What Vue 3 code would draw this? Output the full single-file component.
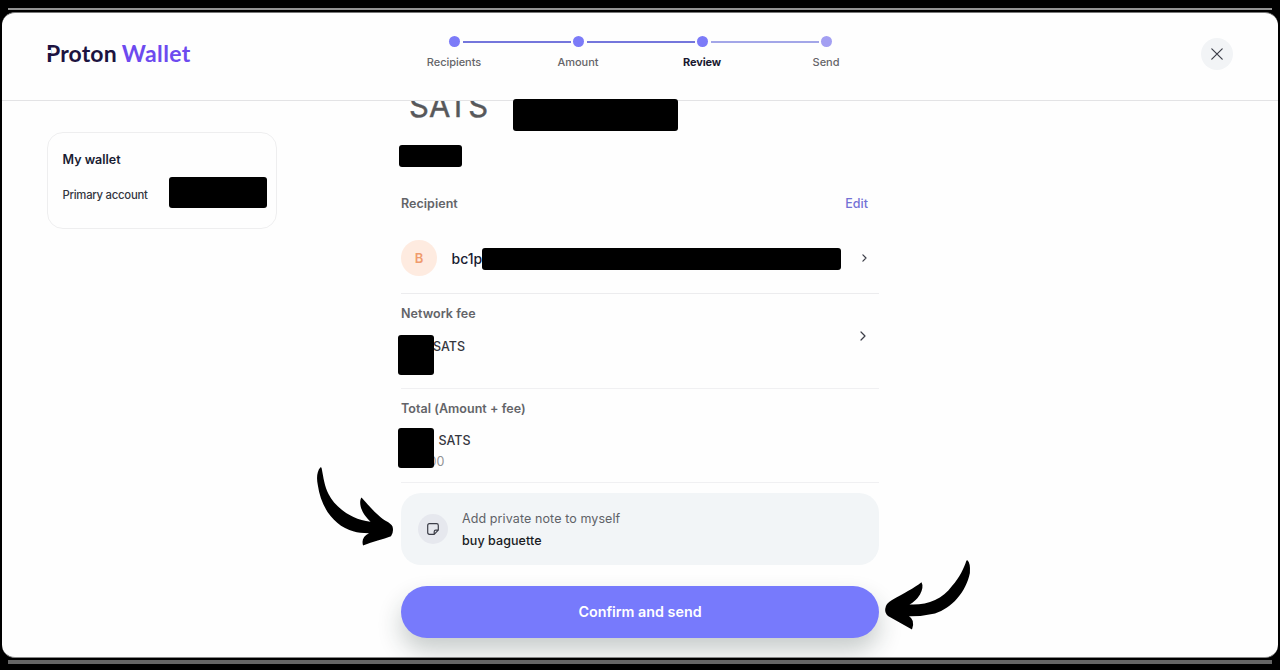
<script setup>
const steps = [
  { label: 'Recipients', state: 'done' },
  { label: 'Amount', state: 'done' },
  { label: 'Review', state: 'current' },
  { label: 'Send', state: 'next' },
]
</script>

<template>
  <div class="screen">
    <div class="stripe top"></div>
    <div class="stripe bottom"></div>
    <div class="window">
      <header class="header">
        <div class="logo"><span class="brand">Proton</span><span class="product">Wallet</span></div>
        <ol class="steps">
          <li v-for="step in steps" :key="step.label" :class="['step', step.state]">
            <i class="dot"></i>
            <span class="step-label">{{ step.label }}</span>
          </li>
        </ol>
        <button class="close" aria-label="Close">
          <svg width="12" height="12" viewBox="0 0 12 12"><path d="M.8.8 11.2 11.2M11.2.8.8 11.2" /></svg>
        </button>
      </header>

      <main class="main">
        <aside class="wallet">
          <strong class="wallet-name">My wallet</strong>
          <span class="wallet-account">Primary account</span>
          <i class="mask mask-balance"></i>
        </aside>

        <section class="review">
          <div class="amount">
            <div class="amount-clip"><span class="amount-unit">SATS</span></div>
            <i class="mask mask-amount"></i>
            <i class="mask mask-fiat"></i>
          </div>

          <div class="section-head">
            <span class="label recipient-label">Recipient</span>
            <a class="edit">Edit</a>
          </div>
          <div class="recipient">
            <span class="avatar">B</span>
            <span class="address">bc1p</span>
            <i class="mask mask-address"></i>
            <svg class="chevron small" width="5" height="8" viewBox="0 0 5 8"><path d="M.9.9 4 4 .9 7.1" /></svg>
          </div>

          <div class="row">
            <span class="label fee-label">Network fee</span>
            <span class="value fee-value">SATS</span>
            <i class="mask mask-row"></i>
            <svg class="chevron large" width="6" height="10" viewBox="0 0 6 10"><path d="M1 1 5 5 1 9" /></svg>
          </div>

          <div class="row">
            <span class="label total-label">Total (Amount + fee)</span>
            <span class="value total-value">SATS</span>
            <span class="fiat">00</span>
            <i class="mask mask-row mask-total"></i>
          </div>

          <div class="note">
            <span class="note-icon">
              <svg width="12" height="12" viewBox="0 0 12 12"><path d="M2.4.7h7.2q1.7 0 1.7 1.7v4.8L7.2 11.3H2.4Q.7 11.3.7 9.6V2.4Q.7.7 2.4.7Z M11.2 7.2H8.7Q7.2 7.2 7.2 8.7v2.5" /></svg>
            </span>
            <div class="note-text">
              <span class="note-title">Add private note to myself</span>
              <span class="note-value">buy baguette</span>
            </div>
          </div>

          <button class="confirm"><span>Confirm and send</span></button>
        </section>
      </main>
    </div>

    <svg class="arrow arrow-note" width="80" height="82" viewBox="315 465 80 82">
      <path d="M320.3 467.4C317 471 316.3 478 317.8 485C321 508 334 526 354 531.6Q359 533 369 533.3C363.500 536 361.500 540 363 545.4C373 541.500 383 539.500 391 536.3Q394 532 392.500 526.500Q391 523.500 386 521C380 518 371 508 366 502.500L361.500 497.4C358.500 502 361 510 365 515.5Q368 519.500 370.500 521.8C351 519.500 335 507 328.500 494C324.500 486 323.500 478 321.700 468.500Q321.300 466.800 320.300 467.400Z" />
    </svg>
    <svg class="arrow arrow-confirm" width="90" height="74" viewBox="883 558 90 74">
      <path d="M967.400 560.300Q970.600 563 969.900 573C966 592 952 608 935 613.500Q922 616.500 909 616.300Q915.500 620 912 629.600C904 625 896 620.500 888 616Q884.800 613 885.200 609Q885.500 603.500 892 600C904 593.500 914 588 921.500 582.300Q924 587 920 594.500Q916 601 909.500 604.500C927 605.500 942 599.500 952 586C960 577 964 568 966.300 561Q966.700 559.800 967.400 560.300Z" />
    </svg>
  </div>
</template>

<style>
body { margin: 0; background: #000; }
</style>

<style scoped>
* { box-sizing: border-box; }
.screen { position: relative; height: 670px; padding: 12px 2px; overflow: hidden; background: #000; font-family: Inter, "Liberation Sans", sans-serif; color: #191c32; }
.screen span, .screen strong, .screen a { white-space: nowrap; }
.stripe { position: absolute; left: 8px; right: 8px; }
.top { top: 8px; height: 2px; background: #929292; }
.bottom { top: 660px; height: 4px; background: #656565; }
.window { position: relative; height: 646px; background: #fefefe; border-top: 1px solid #777; border-bottom: 1px solid #888; border-radius: 13px; overflow: hidden; }
.header { display: flex; align-items: flex-start; height: 88px; border-bottom: 1px solid #e3e3e5; }
.logo { display: flex; gap: 5px; width: 390px; padding: 26px 0 0 44px; font-family: Lato, "Open Sans", sans-serif; font-weight: 700; font-size: 23px; line-height: 28px; }
.brand { position: relative; color: #1c1340; letter-spacing: .15px; }
.brand::after { content: ""; position: absolute; left: 0; top: 11px; width: 4.500px; height: 3px; background: #fefefe; }
.product { color: #6d4aef; letter-spacing: .4px; }
.steps { display: flex; margin: 0; padding: 23px 0 0; list-style: none; }
.step { position: relative; display: flex; flex-direction: column; align-items: center; width: 124px; gap: 8px; font-size: 11px; line-height: 14px; font-weight: 500; color: #656569; }
.step-label { letter-spacing: -.05px; }
.dot { width: 11px; height: 11px; border-radius: 50%; background: #7c7bf8; }
.step + .step::before { content: ""; position: absolute; top: 5px; left: -53px; width: 108px; height: 2px; background: #7476dc; }
.step.next::before { background: #a3a6e8; }
.next .dot { background: #a39ff2; }
.current { color: #191930; font-weight: 700; }
.current .step-label { letter-spacing: -.15px; }
.close { display: grid; place-items: center; width: 32px; height: 32px; margin: 24.500px 0 0 312.500px; padding: 0; border: 0; border-radius: 50%; background: #f2f4f6; }
svg path { fill: none; stroke: #3c3e48; stroke-width: 1.2; stroke-linecap: round; stroke-linejoin: round; }
.main { display: flex; align-items: flex-start; gap: 124px; padding-left: 45px; }
.wallet { position: relative; display: flex; flex-direction: column; gap: 18px; width: 230px; height: 97px; margin-top: 31px; padding: 19px 0 0 14.500px; border: 1px solid #eeeeef; border-radius: 16px; }
.wallet-name { font-size: 12.5px; font-weight: 600; line-height: 16px; }
.wallet-account { font-size: 11.3px; font-weight: 500; line-height: 18px; letter-spacing: -.25px; color: #34363e; }
.mask { position: absolute; z-index: 2; border-radius: 3px; background: #000; }
.mask-balance { left: 121px; top: 44px; width: 98px; height: 31px; }
.review { width: 478px; }
.amount { position: relative; height: 90px; }
.amount-clip { height: 30px; padding-left: 8px; overflow: hidden; }
.amount-unit { display: block; margin-top: -15px; font-size: 31px; line-height: 40px; letter-spacing: .2px; color: #57585b; -webkit-text-stroke: .4px #57585b; }
.mask-amount { left: 112px; top: -2px; width: 165px; height: 32px; }
.mask-fiat { left: -2px; top: 44px; width: 63px; height: 22px; }
.section-head { display: flex; justify-content: space-between; align-items: center; height: 26px; padding-right: 11px; }
.label { font-size: 12.5px; font-weight: 600; line-height: 16px; letter-spacing: .04px; color: #636468; }
.edit { font-size: 12.5px; font-weight: 500; line-height: 16px; color: #7371d5; }
.recipient { position: relative; display: flex; align-items: center; height: 77px; padding-top: 6px; border-bottom: 1px solid #ececee; }
.avatar { display: grid; place-items: center; width: 36px; height: 36px; border-radius: 50%; background: #feebe0; color: #f09b6d; font-size: 13px; font-weight: 600; }
.address { margin-left: 14.500px; font-size: 14px; font-weight: 500; }
.mask-address { left: 81px; top: 31px; width: 359px; height: 22px; }
.chevron { margin-left: auto; }
.small { margin-right: 12px; }
.row { position: relative; display: flex; flex-direction: column; height: 95px; padding-top: 12px; border-bottom: 1px solid #f0f0f2; }
.row + .row { height: 94px; }
.value { margin-top: 17px; font-size: 12.5px; font-weight: 500; line-height: 16px; color: #35363e; }
.fee-value { padding-left: 32px; }
.total-value { padding-left: 37.500px; margin-top: 16px; }
.fiat { margin-top: 4px; padding-left: 27.500px; font-size: 12.500px; line-height: 17px; color: #929295; }
.mask-row { left: -3px; top: 41px; width: 36px; height: 40px; }
.mask-total { top: 39px; }
.large { position: absolute; right: 13px; top: 36.500px; }
.note { display: flex; align-items: center; height: 72px; margin-top: 10px; padding-left: 17px; border-radius: 20px; background: #f2f5f7; }
.note-icon { display: grid; place-items: center; width: 30px; height: 30px; border-radius: 50%; background: #e6e8ee; }
.note-text { display: flex; flex-direction: column; gap: 5px; margin-left: 14px; font-size: 12.5px; line-height: 17px; }
.note-title { letter-spacing: .1px; color: #606267; }
.note-value { font-weight: 500; letter-spacing: .08px; color: #191b22; }
.confirm { display: block; width: 478px; height: 52px; margin-top: 21.300px; padding: 0; border: 0; border-radius: 26px; background: #777afc; box-shadow: 0 13px 24px rgba(25, 45, 40, .24); color: #fff; font: 600 14.3px/20px Inter, sans-serif; }
.arrow { position: absolute; z-index: 3; }
.arrow path { fill: #000; stroke: none; }
.arrow-note { left: 315px; top: 465px; }
.arrow-confirm { left: 883px; top: 558px; }
</style>
